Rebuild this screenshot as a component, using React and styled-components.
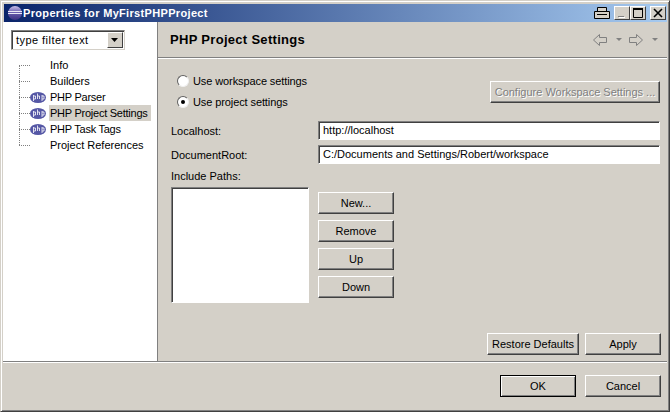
import styled, { createGlobalStyle } from 'styled-components';

const Global = createGlobalStyle`
    html, body { margin: 0; padding: 0; background: #d4d0c8; }
    * { box-sizing: border-box; }
`

const Win = styled.div`
    width: 670px;
    height: 412px;
    padding: 3px;
    display: flex;
    flex-direction: column;
    background: #d4d0c8;
    border: 1px solid #404040;
    border-top-color: #d4d0c8;
    border-left-color: #d4d0c8;
    box-shadow: inset 1px 1px 0 #fff, inset -1px -1px 0 #808080;
    font-family: "Liberation Sans", Arial, sans-serif;
    font-size: 11px;
    color: #000;
    overflow: hidden;
`

const TitleBar = styled.div`
    height: 18px;
    flex: none;
    display: flex;
    align-items: center;
    padding: 0 1px 0 3px;
    margin: 0 -1px 0 0;
    background: linear-gradient(to right, #0a246a, #a6caf0);
`

const TitleText = styled.div`
    color: #fff;
    font-weight: bold;
    font-size: 11px;
    letter-spacing: 0.33px;
    flex: 1;
`

const CapButton = styled.div`
    width: 16px;
    height: 14px;
    margin-left: ${p => p.$gap || 0}px;
    background: #d4d0c8;
    border: 1px solid;
    border-color: #fff #404040 #404040 #fff;
    display: flex;
    align-items: center;
    justify-content: center;
`

const PrintGlyph = styled.div`
    width: 16px;
    height: 14px;
    display: flex;
    align-items: center;
    justify-content: center;
`

const Main = styled.div`
    flex: 1;
    min-height: 0;
    display: flex;
    margin: 0 -1px;
    border-bottom: 1px solid #808080;
`

const Side = styled.div`
    width: 155px;
    flex: none;
    background: #fff;
    border-right: 1px solid #808080;
    padding: 8px 8px;
`

const Combo = styled.div`
    width: 114px;
    height: 20px;
    display: flex;
    align-items: center;
    justify-content: space-between;
    padding-left: 4px;
    background: #fff;
    border: 1px solid;
    border-color: #808080 #d4d0c8 #d4d0c8 #808080;
    box-shadow: inset 1px 1px 0 #404040;
    font-size: 11px;
    letter-spacing: 0.45px;
`

const ComboArrow = styled.div`
    width: 16px;
    height: 16px;
    margin-right: 1px;
    background: #d4d0c8;
    border: 1px solid;
    border-color: #fff #404040 #404040 #fff;
    display: flex;
    align-items: center;
    justify-content: center;
`

const Tree = styled.ul`
    list-style: none;
    margin: 7px 0 0 0;
    padding: 0;
    position: relative;
`

const TreeRow = styled.li`
    height: 16px;
    display: flex;
    align-items: center;
    white-space: nowrap;
`

const Dots = styled.span`
    width: 11px;
    margin-left: 8px;
    flex: none;
    border-top: 1px dotted #808080;
`

const TreeLine = styled.span`
    position: absolute;
    left: 8px;
    top: 8px;
    height: 80px;
    border-left: 1px dotted #808080;
`

const IconSlot = styled.span`
    width: 19px;
    height: 16px;
    flex: none;
    display: flex;
    align-items: center;
`

const TreeLabel = styled.span`
    padding: 0 3px 0 1px;
    line-height: 16px;
    letter-spacing: ${p => (p.$tight ? '-0.25px' : '0')};
    background: ${p => (p.$selected ? '#d4d0c8' : 'transparent')};
`

const Right = styled.div`
    flex: 1;
    min-width: 0;
    display: flex;
    flex-direction: column;
`

const Header = styled.div`
    height: 36px;
    flex: none;
    display: flex;
    align-items: center;
    padding: 0 8px 0 12px;
    border-bottom: 1px solid #808080;
    box-shadow: 0 1px 0 #fff;
`

const HeaderTitle = styled.div`
    flex: 1;
    font-weight: bold;
    font-size: 13px;
    letter-spacing: 0.3px;
`

const Body = styled.div`
    flex: 1;
    min-height: 0;
    display: flex;
    flex-direction: column;
    padding: 16px 6px 6px 13px;
`

const TopRow = styled.div`
    display: flex;
    justify-content: space-between;
    align-items: flex-start;
    height: 47px;
    padding-right: 1px;
`

const Radios = styled.div`
    display: flex;
    flex-direction: column;
    gap: 8px;
    padding-left: 6px;
`

const RadioRow = styled.label`
    display: flex;
    align-items: center;
    gap: 4px;
    height: 13px;
    white-space: nowrap;
    letter-spacing: -0.1px;
`

const RadioDot = styled.span`
    width: 12px;
    height: 12px;
    border-radius: 50%;
    background: #fff;
    border: 1px solid;
    border-color: #606060 #f0f0f0 #f0f0f0 #606060;
    display: flex;
    align-items: center;
    justify-content: center;
    &::after {
        content: '';
        width: 4px;
        height: 4px;
        border-radius: 50%;
        background: ${p => (p.$on ? '#000' : 'transparent')};
    }
`

const Button = styled.button`
    width: ${p => p.$w || 76}px;
    height: 22px;
    flex: none;
    padding: 0;
    margin-top: ${p => p.$top || 0}px;
    background: #d4d0c8;
    font: inherit;
    white-space: nowrap;
    color: ${p => (p.disabled ? '#808080' : '#000')};
    text-shadow: ${p => (p.disabled ? '1px 1px 0 #fff' : 'none')};
    border: 1px solid;
    border-color: ${p => (p.$def ? '#000' : '#fff #404040 #404040 #fff')};
    box-shadow: ${p => (p.$def ? 'inset 1px 1px 0 #fff, inset -1px -1px 0 #808080' : 'inset -1px -1px 0 #808080')};
`

const FieldRow = styled.div`
    display: flex;
    align-items: center;
    height: 19px;
    margin-bottom: 5px;
    padding-right: 1px;
`

const FieldLabel = styled.div`
    width: 147px;
    flex: none;
`

const Field = styled.div`
    flex: 1;
    height: 19px;
    padding-left: 4px;
    line-height: 16px;
    background: #fff;
    border: 1px solid;
    border-color: #808080 #fff #fff #808080;
    box-shadow: inset 1px 1px 0 #404040;
    white-space: nowrap;
`

const PathsLabel = styled.div`
    height: 13px;
    line-height: 13px;
    margin: 1px 0 4px;
`

const PathsRow = styled.div`
    display: flex;
    gap: 9px;
    align-items: flex-start;
`

const PathsList = styled.div`
    width: 138px;
    height: 116px;
    background: #fff;
    border: 1px solid;
    border-color: #808080 #fff #fff #808080;
    box-shadow: inset 1px 1px 0 #404040;
`

const PathButtons = styled.div`
    display: flex;
    flex-direction: column;
    gap: 6px;
    margin-top: 5px;
`

const BodyFooter = styled.div`
    margin-top: auto;
    display: flex;
    justify-content: flex-end;
    gap: 6px;
`

const Footer = styled.div`
    height: 46px;
    flex: none;
    margin: 0 -1px;
    display: flex;
    justify-content: flex-end;
    align-items: center;
    gap: 9px;
    padding: 0 6px 0 0;
    border-top: 1px solid #fff;
`

const PhpIcon = () => (
    <svg width="16" height="11" viewBox="0 0 16 11">
        <ellipse cx="8" cy="5.5" rx="8" ry="5.5" fill="#5557a5" />
        <path d="M3.5 3v6M3.5 4h2v3h-2M7.5 1.5V7M7.5 4h2v3M12 3v6M12 4h2v3h-2" stroke="#fff" strokeWidth="0.8" fill="none" />
    </svg>
)

const Logo = () => (
    <svg width="16" height="16" viewBox="0 0 16 16">
        <defs>
            <linearGradient id="eclipseBall" x1="0" y1="0" x2="0" y2="1">
                <stop offset="0" stopColor="#c9bfe8" />
                <stop offset="0.45" stopColor="#6a5fb0" />
                <stop offset="1" stopColor="#3a3080" />
            </linearGradient>
        </defs>
        <circle cx="8" cy="8" r="7" fill="url(#eclipseBall)" />
        <rect x="1" y="6" width="14" height="1" fill="#e8e8f4" />
        <rect x="1" y="8" width="14" height="1" fill="#e8e8f4" />
    </svg>
)

const NavArrows = () => (
    <svg width="66" height="12" viewBox="0 0 66 12">
        <path d="M.5 6l6-5.5v3h7v5h-7v3z" fill="none" stroke="#808080" />
        <path d="M23 4h6l-3 3z" fill="#808080" />
        <path d="M49.5 6l-6-5.5v3h-7v5h7v3z" fill="none" stroke="#808080" />
        <path d="M59 4h6l-3 3z" fill="#808080" />
    </svg>
)

const items = [
    { name: 'Info' },
    { name: 'Builders' },
    { name: 'PHP Parser', php: true },
    { name: 'PHP Project Settings', php: true, selected: true },
    { name: 'PHP Task Tags', php: true },
    { name: 'Project References' },
]

const App = () => {
    return <Win>
        <Global />
        <TitleBar>
            <Logo />
            <TitleText>Properties for MyFirstPHPProject</TitleText>
            <PrintGlyph>
                <svg width="16" height="14" viewBox="0 0 16 14">
                    <path d="M3.5 5.5V1.5h9v4" stroke="#000" fill="#d4d0c8" />
                    <path d="M.5 5.5h15v7H.5z" stroke="#000" fill="#d4d0c8" />
                    <path d="M3 8.5h10" stroke="#000" />
                </svg>
            </PrintGlyph>
            <CapButton $gap={4}>
                <svg width="10" height="10" viewBox="0 0 10 10">
                    <path d="M2 9h6v1H2z" fill="#fff" />
                    <path d="M1 8h6v1H1z" fill="#808080" />
                </svg>
            </CapButton>
            <CapButton>
                <svg width="10" height="10" viewBox="0 0 10 10"><path d="M.5 1.5h9v8h-9z" stroke="#000" fill="none" /><path d="M0 0h10v2H0z" /></svg>
            </CapButton>
            <CapButton $gap={4}>
                <svg width="10" height="10" viewBox="0 0 10 10"><path d="M1 1l8 8M9 1l-8 8" stroke="#000" strokeWidth="1.6" /></svg>
            </CapButton>
        </TitleBar>
        <Main>
            <Side>
                <Combo>
                    type filter text
                    <ComboArrow>
                        <svg width="8" height="5" viewBox="0 0 8 5"><path d="M0 0h7L3.5 4z" /></svg>
                    </ComboArrow>
                </Combo>
                <Tree>
                    <TreeLine />
                    {items.map(item => (
                        <TreeRow key={item.name}>
                            <Dots />
                            <IconSlot>{item.php && <PhpIcon />}</IconSlot>
                            <TreeLabel $tight={item.php} $selected={item.selected}>{item.name}</TreeLabel>
                        </TreeRow>
                    ))}
                </Tree>
            </Side>
            <Right>
                <Header>
                    <HeaderTitle>PHP Project Settings</HeaderTitle>
                    <NavArrows />
                </Header>
                <Body>
                    <TopRow>
                        <Radios>
                            <RadioRow><RadioDot />Use workspace settings</RadioRow>
                            <RadioRow><RadioDot $on />Use project settings</RadioRow>
                        </Radios>
                        <Button $w={170} $top={7} disabled>Configure Workspace Settings ...</Button>
                    </TopRow>
                    <FieldRow>
                        <FieldLabel>Localhost:</FieldLabel>
                        <Field>http://localhost</Field>
                    </FieldRow>
                    <FieldRow>
                        <FieldLabel>DocumentRoot:</FieldLabel>
                        <Field>C:/Documents and Settings/Robert/workspace</Field>
                    </FieldRow>
                    <PathsLabel>Include Paths:</PathsLabel>
                    <PathsRow>
                        <PathsList />
                        <PathButtons>
                            <Button>New...</Button>
                            <Button>Remove</Button>
                            <Button>Up</Button>
                            <Button>Down</Button>
                        </PathButtons>
                    </PathsRow>
                    <BodyFooter>
                        <Button $w={92}>Restore Defaults</Button>
                        <Button>Apply</Button>
                    </BodyFooter>
                </Body>
            </Right>
        </Main>
        <Footer>
            <Button $def>OK</Button>
            <Button>Cancel</Button>
        </Footer>
    </Win>
}

export default App;
